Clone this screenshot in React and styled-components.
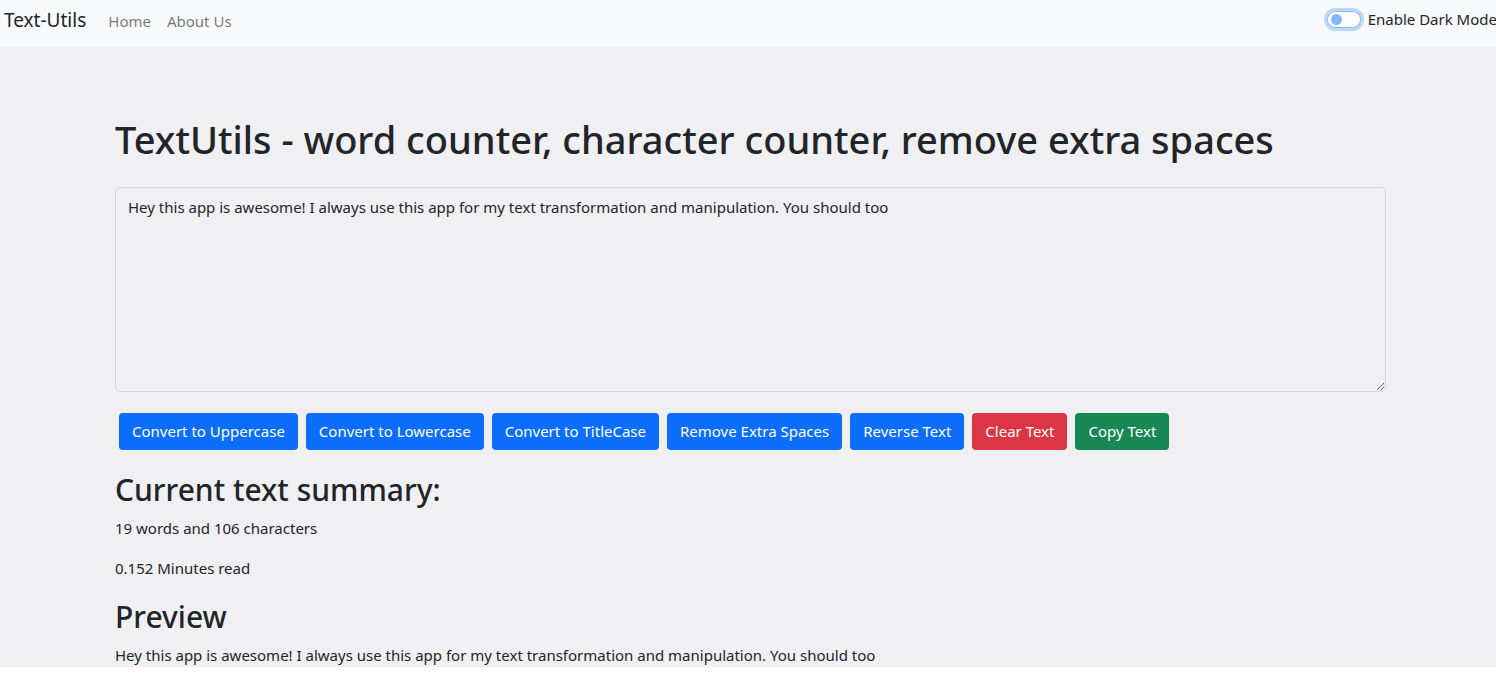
import * as React from 'react'
import styled, { createGlobalStyle } from 'styled-components'

const GlobalStyle = createGlobalStyle`
  html, body {
    margin: 0;
    padding: 0;
    background: #ffffff;
  }
  body {
    font-family: "Noto Sans", "Open Sans", sans-serif;
    font-size: 16px;
    line-height: 1.5;
    color: #212529;
  }
  * {
    box-sizing: border-box;
  }
`

const Page = styled.div`
  background: #f0f0f2;
  padding-bottom: 0.1px;
`

const Navbar = styled.nav`
  display: flex;
  align-items: center;
  height: 47px;
  padding: 0 0 6px 4px;
  background: #f8f9fa;
  overflow: hidden;
`

const Brand = styled.a`
  font-size: 19px;
  color: #212529;
  margin-right: 22px;
  text-decoration: none;
`

const NavLinks = styled.ul`
  display: flex;
  gap: 16px;
  list-style: none;
  margin: 0;
  padding: 0;
  flex: 1;
`

const NavLink = styled.a`
  font-size: 15px;
  color: rgba(0, 0, 0, 0.55);
  text-decoration: none;
`

const SwitchWrap = styled.label`
  display: flex;
  align-items: center;
  gap: 7px;
  font-size: 15px;
  color: #212529;
  white-space: nowrap;
  margin-right: -1px;
  margin-top: -3px;
`

const SwitchTrack = styled.span`
  width: 34px;
  height: 17px;
  border-radius: 9px;
  border: 1px solid #86b7fe;
  background: #fff;
  box-shadow: 0 0 0 3px rgba(13, 110, 253, 0.25);
  display: flex;
  align-items: center;
  padding-left: 3px;

  &::after {
    content: '';
    width: 11px;
    height: 11px;
    border-radius: 50%;
    background: #86b7fe;
  }
`

const Container = styled.main`
  width: 1271px;
  margin-left: 115px;
  padding-top: 70px;
`

const Title = styled.h1`
  font-size: 38px;
  font-weight: 500;
  line-height: 1.2;
  margin: 0 0 24px;
`

const TextArea = styled.textarea`
  display: block;
  width: 100%;
  height: 205px;
  padding: 8px 12px;
  font-family: inherit;
  font-size: 15px;
  line-height: 1.5;
  color: #212529;
  background: #f0f0f2;
  border: 1px solid #d6d6d8;
  border-radius: 5px;
  resize: vertical;
  margin-bottom: 21px;
`

const ButtonRow = styled.div`
  display: flex;
  gap: 8px;
  padding-left: 4px;
`

const tones = {
  primary: '#0d6efd',
  danger: '#dc3545',
  success: '#198754',
}

const Button = styled.button`
  height: 37px;
  padding: 0 13px;
  font-family: inherit;
  font-size: 15px;
  color: #fff;
  background: ${(p) => tones[p.$tone || 'primary']};
  border: none;
  border-radius: 4px;
`

const Summary = styled.section`
  margin-top: 22px;
`

const Heading = styled.h2`
  font-size: 30px;
  font-weight: 500;
  line-height: 1.2;
  margin: 0 0 8px;
  padding-top: ${(p) => (p.$spaced ? '3px' : '0')};
`

const Text = styled.p`
  font-size: 15px;
  line-height: 24px;
  margin: 0 0 16px;

  &:last-child {
    margin-bottom: 0;
  }
`

const sample =
  'Hey this app is awesome! I always use this app for my text transformation and manipulation. You should too'

export default function App() {
  return (
    <>
      <GlobalStyle />
      <Page>
        <Navbar>
          <Brand href="#">Text-Utils</Brand>
          <NavLinks>
            <li>
              <NavLink href="#">Home</NavLink>
            </li>
            <li>
              <NavLink href="#">About Us</NavLink>
            </li>
          </NavLinks>
          <SwitchWrap>
            <SwitchTrack />
            Enable Dark Mode
          </SwitchWrap>
        </Navbar>

        <Container>
          <Title>TextUtils - word counter, character counter, remove extra spaces</Title>
          <TextArea defaultValue={sample} />
          <ButtonRow>
            <Button>Convert to Uppercase</Button>
            <Button>Convert to Lowercase</Button>
            <Button>Convert to TitleCase</Button>
            <Button>Remove Extra Spaces</Button>
            <Button>Reverse Text</Button>
            <Button $tone="danger">Clear Text</Button>
            <Button $tone="success">Copy Text</Button>
          </ButtonRow>
          <Summary>
            <Heading>Current text summary:</Heading>
            <Text>19 words and 106 characters</Text>
            <Text>0.152 Minutes read</Text>
            <Heading $spaced>Preview</Heading>
            <Text>{sample}</Text>
          </Summary>
        </Container>
      </Page>
    </>
  )
}
